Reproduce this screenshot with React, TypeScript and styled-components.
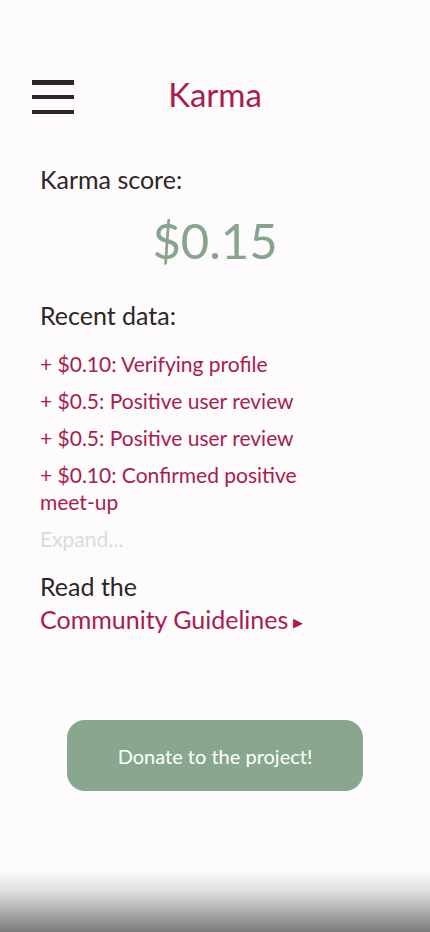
import React from "react";
import styled, { createGlobalStyle } from "styled-components";

const Global = createGlobalStyle`
  html, body { margin: 0; padding: 0; background: #fdfbfc; }
  body { font-family: Lato, "Open Sans", sans-serif; }
`;

const Page = styled.div`
  position: relative;
  width: 430px;
  height: 932px;
  background: #fdfbfc;
  overflow: hidden;
  display: flex;
  flex-direction: column;
`;

const Header = styled.header`
  position: relative;
  height: 34px;
  margin-top: 80px;
  display: flex;
  align-items: center;
  justify-content: center;
`;

const Burger = styled.button`
  position: absolute;
  left: 32px;
  top: 0;
  width: 42px;
  height: 34px;
  padding: 0;
  border: 0;
  background: transparent;
  display: flex;
  flex-direction: column;
  justify-content: space-between;
  cursor: pointer;
`;

const Bar = styled.span`
  display: block;
  height: 4.5px;
  background: #2d2626;
`;

const Title = styled.h1`
  margin: 0;
  padding-bottom: 6px;
  font-size: 33px;
  font-weight: 400;
  color: #a81d4f;
  line-height: 30px;
`;

const Content = styled.main`
  padding: 0 40px;
  display: flex;
  flex-direction: column;
`;

const Label = styled.div<{ $mt: number }>`
  margin-top: ${(p) => p.$mt}px;
  font-size: 25px;
  line-height: 30px;
  color: #2d2626;
`;

const Score = styled.div`
  margin-top: 16px;
  text-align: center;
  font-size: 49px;
  line-height: 60px;
  color: #87a58d;
`;

const List = styled.ul`
  list-style: none;
  margin: 20px 0 0;
  padding: 0;
  display: flex;
  flex-direction: column;
  gap: 10px;
  width: 290px;
`;

const Item = styled.li`
  font-size: 21px;
  line-height: 27px;
  color: #a81d4f;
`;

const Expand = styled.div`
  margin-top: 10px;
  font-size: 21px;
  line-height: 27px;
  color: #dcdadb;
`;

const GuideLink = styled.a`
  display: block;
  height: 32px;
  margin-top: 2px;
  font-size: 25px;
  line-height: 32px;
  color: #a81d4f;
  text-decoration: none;
`;

const Arrow = styled.span`
  font-size: 13px;
  margin-left: 5px;
  vertical-align: 2px;
`;

const ButtonWrap = styled.div`
  display: flex;
  justify-content: center;
  margin-top: 85px;
`;

const Donate = styled.button`
  width: 296px;
  height: 71px;
  border: 0;
  border-radius: 18px;
  background: #89a68f;
  color: #ffffff;
  font-family: Lato, sans-serif;
  font-size: 20px;
  cursor: pointer;
`;

const Fade = styled.div`
  position: absolute;
  left: 0;
  right: 0;
  bottom: 0;
  height: 62px;
  background: linear-gradient(to bottom, rgba(253,251,252,0) 0%, rgba(220,219,220,0.9) 35%, #7a7a7a 100%);
  pointer-events: none;
`;

const items = [
  "+ $0.10: Verifying profile",
  "+ $0.5: Positive user review",
  "+ $0.5: Positive user review",
  "+ $0.10: Confirmed positive meet-up",
];

export default function App() {
  return (
    <>
      <Global />
      <Page>
        <Header>
          <Burger aria-label="Menu">
            <Bar />
            <Bar />
            <Bar />
          </Burger>
          <Title>Karma</Title>
        </Header>
        <Content>
          <Label $mt={50}>Karma score:</Label>
          <Score>$0.15</Score>
          <Label $mt={30}>Recent data:</Label>
          <List>
            {items.map((t, i) => (
              <Item key={i}>{t}</Item>
            ))}
          </List>
          <Expand>Expand...</Expand>
          <Label $mt={19}>Read the</Label>
          <GuideLink href="#">
            Community Guidelines<Arrow>▶</Arrow>
          </GuideLink>
        </Content>
        <ButtonWrap>
          <Donate>Donate to the project!</Donate>
        </ButtonWrap>
        <Fade />
      </Page>
    </>
  );
}
